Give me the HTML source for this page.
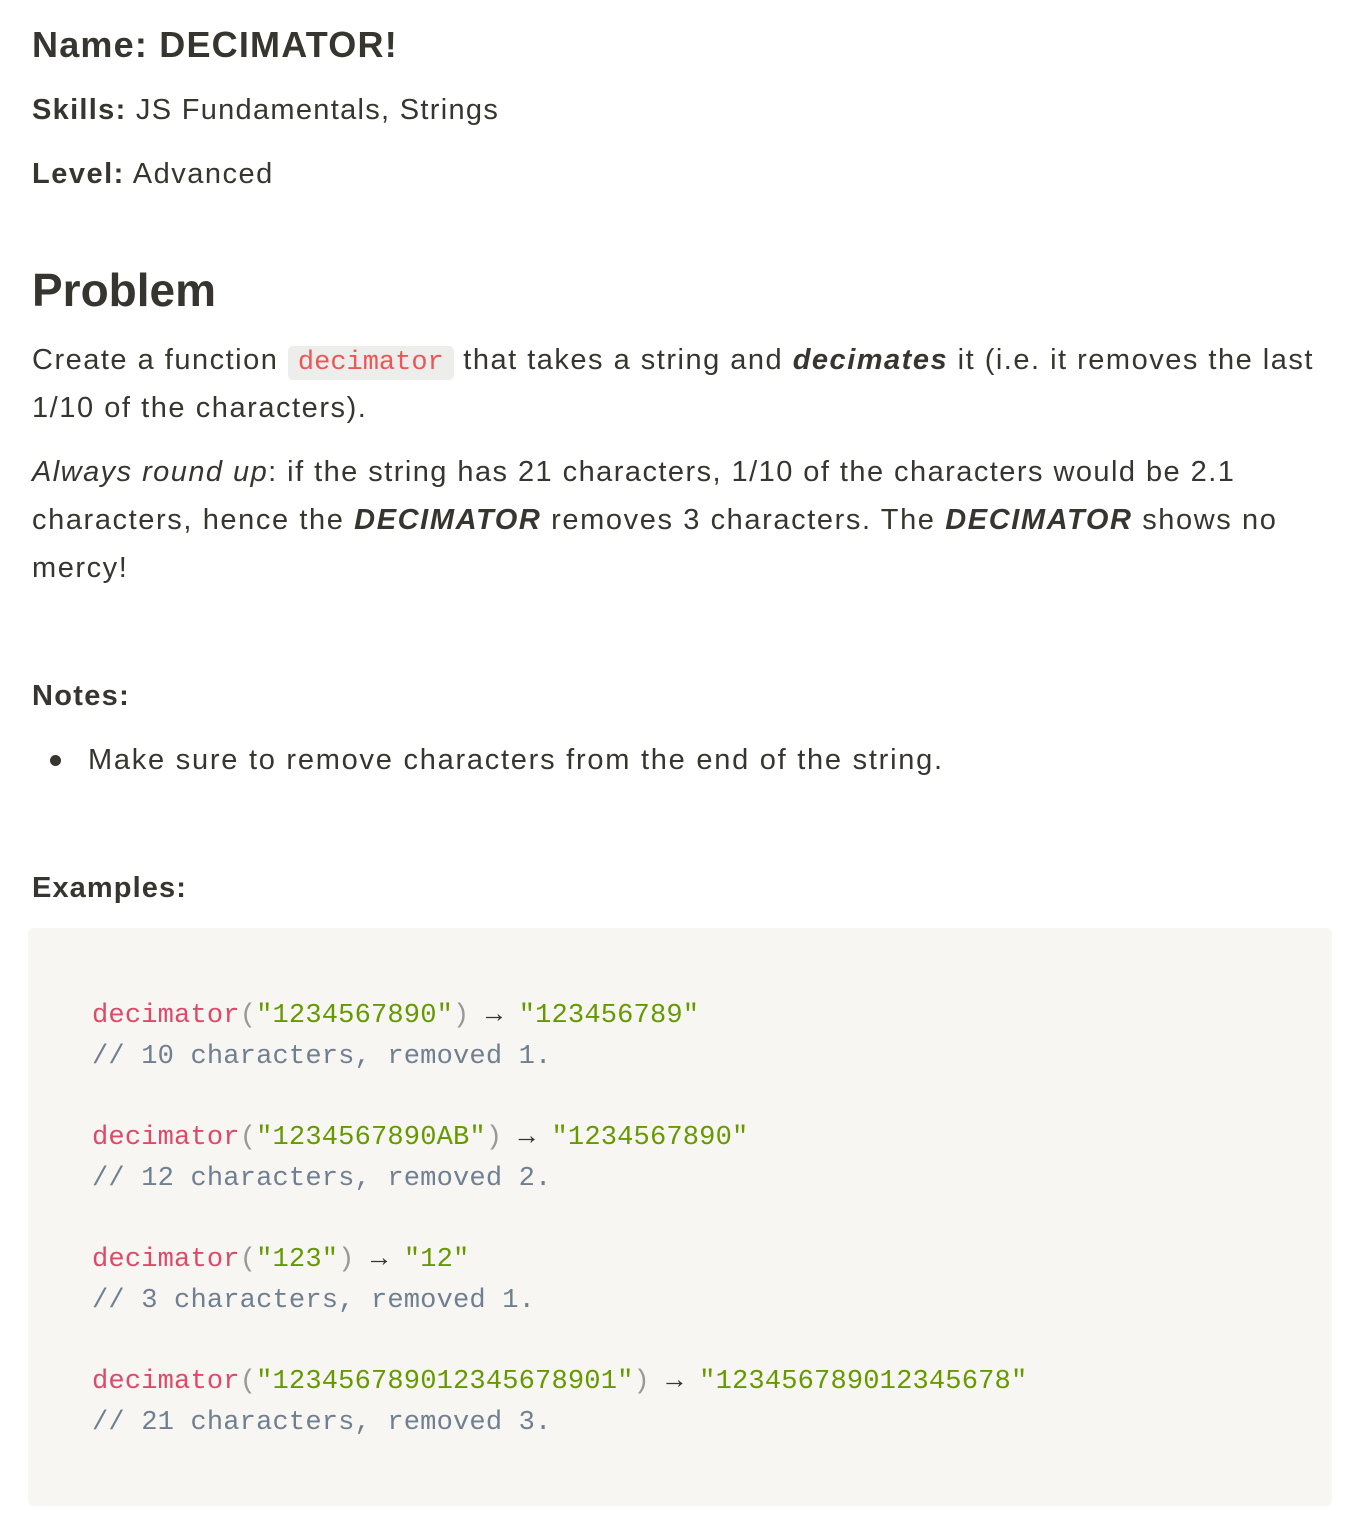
<!DOCTYPE html>
<html><head><meta charset="utf-8"><style>
body{margin:0;background:#fff;width:1354px;height:1528px;position:relative;font-family:"Liberation Sans",sans-serif;color:#37352f;}
.l{position:absolute;left:32px;white-space:nowrap;font-size:29px;line-height:48px;letter-spacing:1.55px;}
b{font-weight:bold}
.c{font-family:"Liberation Mono",monospace;color:#eb5757;background:#ededeb;border-radius:5px;padding:2px 10px;font-size:27px;letter-spacing:0;}
.box{position:absolute;left:28px;top:928px;width:1304px;height:578px;background:#f7f6f3;border-radius:6px;}
.code{position:absolute;left:92px;top:996px;font-family:"Liberation Mono",monospace;font-size:27.1px;line-height:40.7px;white-space:pre;color:#37352f;letter-spacing:0.15px;}
.f{color:#dd4a68}.s{color:#669900}.p{color:#999}.m{color:#708090}
.dot{position:absolute;left:50px;top:755px;width:11px;height:11px;border-radius:50%;background:#37352f;}
</style></head><body>
<div class="l" style="top:21px;font-size:36px;font-weight:bold;letter-spacing:1.2px;">Name: DECIMATOR!</div>
<div class="l" style="top:86px;letter-spacing:1.3px;"><b>Skills:</b> JS Fundamentals, Strings</div>
<div class="l" style="top:150px;letter-spacing:1.5px;"><b>Level:</b> Advanced</div>
<div class="l" style="top:262px;font-size:46px;line-height:56px;font-weight:bold;letter-spacing:0;">Problem</div>
<div class="l" style="top:336px;letter-spacing:1.5px;">Create a function <span class="c">decimator</span> that takes a string and <b><i>decimates</i></b> it (i.e. it removes the last</div>
<div class="l" style="top:384px;">1/10 of the characters).</div>
<div class="l" style="top:448px;letter-spacing:1.45px;"><i>Always round up</i>: if the string has 21 characters, 1/10 of the characters would be 2.1</div>
<div class="l" style="top:496px;letter-spacing:1.6px;">characters, hence the <b><i>DECIMATOR</i></b> removes 3 characters. The <b><i>DECIMATOR</i></b> shows no</div>
<div class="l" style="top:544px;">mercy!</div>
<div class="l" style="top:672px;font-weight:bold;letter-spacing:1.3px;">Notes:</div>
<div class="dot"></div>
<div class="l" style="top:736px;left:88px;letter-spacing:1.75px;">Make sure to remove characters from the end of the string.</div>
<div class="l" style="top:864px;font-weight:bold;letter-spacing:1.1px;">Examples:</div>
<div class="box"></div>
<div class="code"><span class="f">decimator</span><span class="p">(</span><span class="s">"1234567890"</span><span class="p">)</span> → <span class="s">"123456789"</span>
<span class="m">// 10 characters, removed 1.</span>

<span class="f">decimator</span><span class="p">(</span><span class="s">"1234567890AB"</span><span class="p">)</span> → <span class="s">"1234567890"</span>
<span class="m">// 12 characters, removed 2.</span>

<span class="f">decimator</span><span class="p">(</span><span class="s">"123"</span><span class="p">)</span> → <span class="s">"12"</span>
<span class="m">// 3 characters, removed 1.</span>

<span class="f">decimator</span><span class="p">(</span><span class="s">"123456789012345678901"</span><span class="p">)</span> → <span class="s">"123456789012345678"</span>
<span class="m">// 21 characters, removed 3.</span></div>
</body></html>
